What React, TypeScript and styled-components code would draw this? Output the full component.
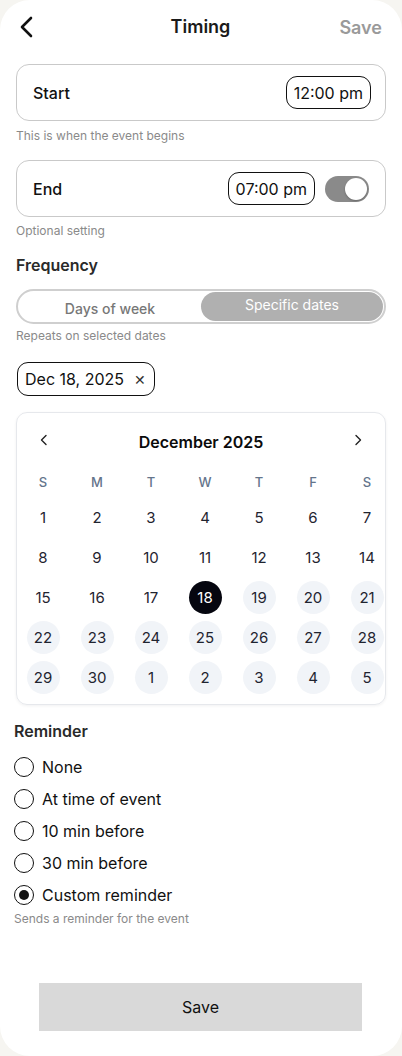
import React, { useState } from "react";
import styled, { createGlobalStyle } from "styled-components";

const Global = createGlobalStyle`
  html, body { margin: 0; padding: 0; background: #f6f5f1; }
  body { font-family: Inter, "Noto Sans", Arial, sans-serif; -webkit-font-smoothing: antialiased; }
  * { box-sizing: border-box; }
`;

const Screen = styled.div`
  width: 402px;
  height: 1056px;
  background: #ffffff;
  border-radius: 30px;
  overflow: hidden;
  display: flex;
  flex-direction: column;
  position: relative;
`;

const Header = styled.header`
  height: 52px;
  display: grid;
  grid-template-columns: 1fr auto 1fr;
  align-items: center;
  padding: 0 20px 0 19px;
`;

const BackBtn = styled.button`
  justify-self: start;
  border: none;
  background: none;
  padding: 0;
  display: flex;
  align-items: center;
  margin-top: 2px;
`;

const Title = styled.h1`
  margin: 0;
  font-size: 18px;
  font-weight: 600;
  color: #1a1a1a;
`;

const HeaderSave = styled.span`
  justify-self: end;
  font-size: 18px;
  font-weight: 600;
  color: #9a9a9a;
  margin-top: 2px;
`;

const Body = styled.div`
  padding: 12px 16px 0 16px;
  display: flex;
  flex-direction: column;
`;

const TimeCard = styled.div<{ mt?: number }>`
  margin-top: ${(p) => p.mt ?? 0}px;
  height: 57px;
  border: 1px solid #c9c9c9;
  border-radius: 13px;
  display: flex;
  align-items: center;
  padding: 0 14px 0 16px;
  gap: 10px;
`;

const TimeLabel = styled.span`
  flex: 1;
  font-size: 16px;
  font-weight: 500;
  color: #111;
`;

const TimePill = styled.span`
  height: 33px;
  padding: 0 7px;
  border: 1px solid #111;
  border-radius: 11px;
  display: flex;
  align-items: center;
  font-size: 16px;
  color: #111;
`;

const Toggle = styled.span<{ on: boolean }>`
  width: 44px;
  height: 26px;
  border-radius: 13px;
  background: ${(p) => (p.on ? "#8a8a8a" : "#d0d0d0")};
  position: relative;
  margin-right: 2px;
  &::after {
    content: "";
    position: absolute;
    top: 2px;
    left: ${(p) => (p.on ? "20px" : "2px")};
    width: 22px;
    height: 22px;
    border-radius: 50%;
    background: #fff;
    box-shadow: 0 1px 2px rgba(0, 0, 0, 0.25);
  }
`;

const Hint = styled.p<{ mt?: number; ml?: number }>`
  margin: ${(p) => p.mt ?? 6}px 0 0 ${(p) => p.ml ?? 0}px;
  font-size: 12px;
  color: #8a8a8a;
  line-height: 16px;
`;

const SectionTitle = styled.h2<{ mt: number; ml?: number }>`
  margin: ${(p) => p.mt}px 0 0 ${(p) => p.ml ?? 0}px;
  font-size: 16px;
  font-weight: 600;
  color: #2a2a2a;
  line-height: 20px;
`;

const Segmented = styled.div`
  margin-top: 14px;
  height: 35px;
  border: 2px solid #cfcfcf;
  border-radius: 18px;
  display: grid;
  grid-template-columns: 1fr 1fr;
  padding: 1px;
`;

const Segment = styled.button<{ active: boolean }>`
  border: none;
  border-radius: 15px;
  background: ${(p) => (p.active ? "#b0b0b0" : "transparent")};
  color: ${(p) => (p.active ? "#ffffff" : "#777777")};
  font-family: inherit;
  font-size: 14px;
  font-weight: ${(p) => (p.active ? 400 : 500)};
  padding: ${(p) => (p.active ? "0 0 4px 0" : "4px 0 0 0")};
`;

const Chip = styled.div`
  margin-top: 18px;
  align-self: flex-start;
  margin-left: 1px;
  height: 34px;
  border: 1px solid #111;
  border-radius: 11px;
  display: flex;
  align-items: center;
  gap: 10px;
  padding: 0 8px 0 7px;
  font-size: 16px;
  color: #111;
`;

const ChipX = styled.span`
  font-size: 14px;
  color: #333;
`;

const CalendarCard = styled.div`
  margin-top: 16px;
  height: 293px;
  border: 1px solid #e6e8ec;
  border-radius: 11px;
  box-shadow: 0 1px 3px rgba(15, 23, 42, 0.06);
  display: flex;
  flex-direction: column;
`;

const CalHeader = styled.div`
  height: 56px;
  display: flex;
  align-items: center;
  justify-content: space-between;
  padding: 0 22px 2px 22px;
`;

const CalTitle = styled.span`
  font-size: 16px;
  font-weight: 600;
  color: #0b0b0b;
  margin-top: 4px;
`;

const NavIcon = styled.svg`
  display: block;
`;

const Grid = styled.div`
  display: grid;
  grid-template-columns: repeat(7, 54px);
  grid-auto-rows: 36px;
  row-gap: 4px;
  margin-left: -1px;
`;

const WeekRow = styled(Grid)`
  grid-auto-rows: 26px;
  margin-bottom: 4px;
`;

const WeekDay = styled.span`
  display: flex;
  align-items: center;
  justify-content: center;
  font-size: 13px;
  font-weight: 500;
  color: #64748b;
`;

const DayCell = styled.div`
  display: flex;
  align-items: center;
  justify-content: center;
`;

const Day = styled.span<{ kind: "plain" | "range" | "selected" }>`
  width: 33px;
  height: 33px;
  border-radius: 50%;
  display: flex;
  align-items: center;
  justify-content: center;
  font-size: 15px;
  color: ${(p) => (p.kind === "selected" ? "#ffffff" : "#1f2430")};
  background: ${(p) =>
    p.kind === "selected" ? "#05060f" : p.kind === "range" ? "#f1f4f8" : "transparent"};
`;

const RadioList = styled.div`
  margin: 10px 0 0 -2px;
  display: flex;
  flex-direction: column;
`;

const RadioRow = styled.label`
  height: 32px;
  display: flex;
  align-items: center;
  gap: 8px;
  font-size: 16px;
  color: #111;
`;

const RadioDot = styled.span<{ checked: boolean }>`
  width: 20px;
  height: 20px;
  border-radius: 50%;
  border: 1.5px solid #111;
  display: flex;
  align-items: center;
  justify-content: center;
  &::after {
    content: "";
    width: 10px;
    height: 10px;
    border-radius: 50%;
    background: ${(p) => (p.checked ? "#111" : "transparent")};
  }
`;

const Footer = styled.div`
  margin-top: auto;
  padding: 0 40px 25px 39px;
`;

const SaveButton = styled.button`
  width: 100%;
  height: 48px;
  border: none;
  border-radius: 0;
  background: #d9d9d9;
  font-family: inherit;
  font-size: 16px;
  color: #111;
`;

const weekDays = ["S", "M", "T", "W", "T", "F", "S"];
type DayItem = { n: number; kind: "plain" | "range" | "selected" };
const days: DayItem[] = [];
for (let i = 1; i <= 30; i++) {
  days.push({ n: i, kind: i < 18 ? "plain" : i === 18 ? "selected" : "range" });
}
const visibleDays: DayItem[] = days.concat([1, 2, 3, 4, 5].map((n) => ({ n, kind: "range" as const })));

const reminders = ["None", "At time of event", "10 min before", "30 min before", "Custom reminder"];

export default function App() {
  const [freq, setFreq] = useState<"week" | "dates">("dates");
  const [reminder, setReminder] = useState("Custom reminder");
  return (
    <>
      <Global />
      <Screen>
        <Header>
          <BackBtn aria-label="Back">
            <svg width="14" height="22" viewBox="0 0 14 22">
              <polyline points="12,2 3,11 12,20" fill="none" stroke="#111" strokeWidth="2.6" strokeLinecap="round" strokeLinejoin="round" />
            </svg>
          </BackBtn>
          <Title>Timing</Title>
          <HeaderSave>Save</HeaderSave>
        </Header>
        <Body>
          <TimeCard>
            <TimeLabel>Start</TimeLabel>
            <TimePill>12:00 pm</TimePill>
          </TimeCard>
          <Hint mt={7}>This is when the event begins</Hint>
          <TimeCard mt={16}>
            <TimeLabel>End</TimeLabel>
            <TimePill>07:00 pm</TimePill>
            <Toggle on />
          </TimeCard>
          <Hint mt={6}>Optional setting</Hint>
          <SectionTitle mt={16}>Frequency</SectionTitle>
          <Segmented>
            <Segment active={freq === "week"} onClick={() => setFreq("week")}>Days of week</Segment>
            <Segment active={freq === "dates"} onClick={() => setFreq("dates")}>Specific dates</Segment>
          </Segmented>
          <Hint mt={4}>Repeats on selected dates</Hint>
          <Chip>
            <span>Dec 18, 2025</span>
            <ChipX>✕</ChipX>
          </Chip>
          <CalendarCard>
            <CalHeader>
              <NavIcon width="10" height="12" viewBox="0 0 10 12">
                <polyline points="7,1.5 2.5,6 7,10.5" fill="none" stroke="#222" strokeWidth="1.4" strokeLinecap="round" strokeLinejoin="round" />
              </NavIcon>
              <CalTitle>December 2025</CalTitle>
              <NavIcon width="10" height="12" viewBox="0 0 10 12">
                <polyline points="3,1.5 7.5,6 3,10.5" fill="none" stroke="#222" strokeWidth="1.4" strokeLinecap="round" strokeLinejoin="round" />
              </NavIcon>
            </CalHeader>
            <WeekRow>
              {weekDays.map((d, i) => (
                <WeekDay key={i}>{d}</WeekDay>
              ))}
            </WeekRow>
            <Grid>
              {visibleDays.map((d, i) => (
                <DayCell key={i}>
                  <Day kind={d.kind}>{d.n}</Day>
                </DayCell>
              ))}
            </Grid>
          </CalendarCard>
          <SectionTitle mt={16} ml={-2}>Reminder</SectionTitle>
          <RadioList>
            {reminders.map((r) => (
              <RadioRow key={r} onClick={() => setReminder(r)}>
                <RadioDot checked={reminder === r} />
                <span>{r}</span>
              </RadioRow>
            ))}
          </RadioList>
          <Hint mt={0} ml={-2}>Sends a reminder for the event</Hint>
        </Body>
        <Footer>
          <SaveButton>Save</SaveButton>
        </Footer>
      </Screen>
    </>
  );
}
